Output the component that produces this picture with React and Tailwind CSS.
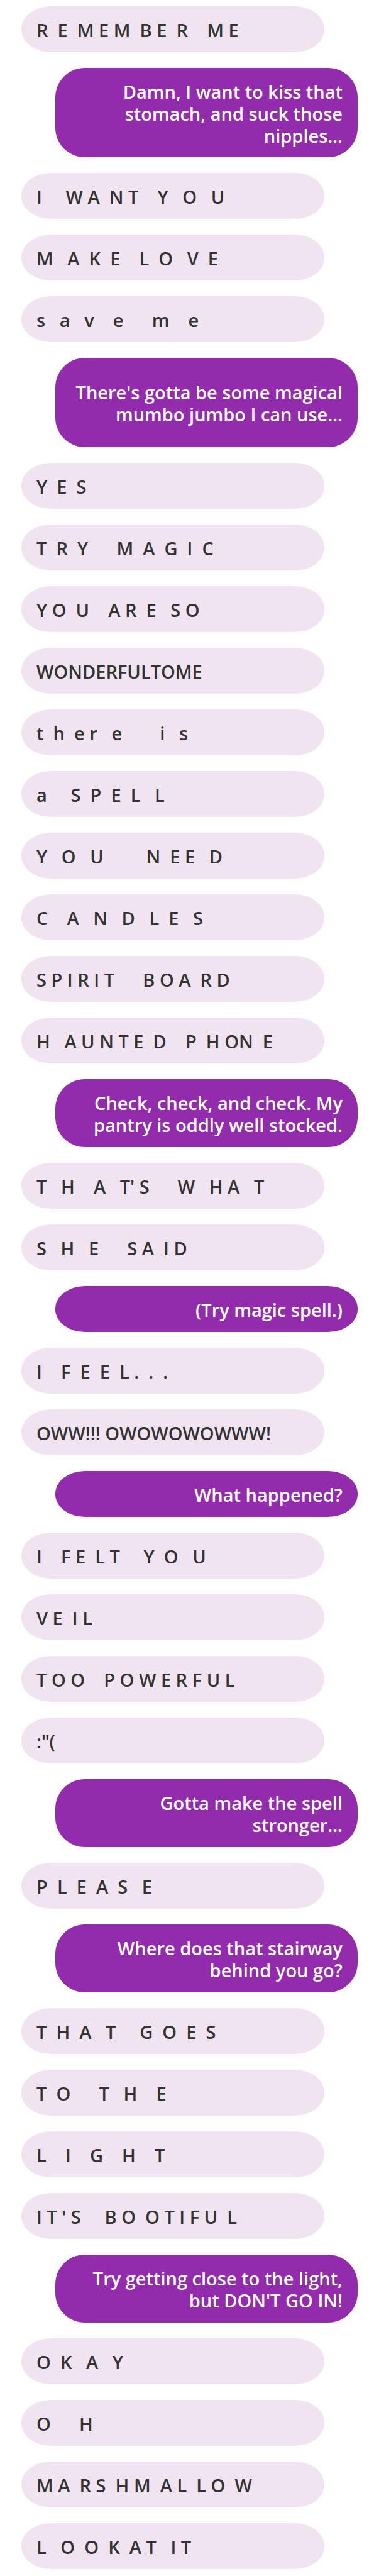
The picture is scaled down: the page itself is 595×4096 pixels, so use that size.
const messages = [
  { text: "R  E  M E M  B E  R    M E" },
  { own: true, size: "lg", text: "Damn, I want to kiss that\nstomach, and suck those\nnipples…" },
  { text: "I     W A  N T    Y   O   U" },
  { text: "M   A  K  E    L  O   V  E" },
  { text: "s   a   v    e      m    e" },
  { own: true, size: "lg", text: "There's gotta be some magical\nmumbo jumbo I can use…" },
  { text: "Y  E  S" },
  { text: "T  R  Y      M  A  G  I  C" },
  { text: "Y O  U    A R  E   S O" },
  { text: "WONDERFULTOME" },
  { text: "t  h  e r   e        i   s" },
  { text: "a     S  P  E  L   L" },
  { text: "Y   O   U         N  E E   D" },
  { text: "C    A   N   D   L  E   S" },
  { text: "S P I R I T      B O A  R D" },
  { text: "H   A U N T E  D    P  H ON  E" },
  { own: true, size: "md", text: "Check, check, and check. My\npantry is oddly well stocked." },
  { text: "T   H    A   T' S      W   H A   T" },
  { text: "S   H   E      S A  I D" },
  { own: true, text: "(Try magic spell.)" },
  { text: "I    F  E  E  L .  .  ." },
  { text: "OWW!!! OWOWOWOWWW!" },
  { own: true, text: "What happened?" },
  { text: "I    F E  L T     Y  O   U" },
  { text: "V E  I L" },
  { text: "T O O    P O W E R F U L" },
  { text: ":\"(" },
  { own: true, size: "md", text: "Gotta make the spell\nstronger…" },
  { text: "P  L  E  A  S   E" },
  { own: true, size: "md", text: "Where does that stairway\nbehind you go?" },
  { text: "T  H  A   T     G  O  E  S" },
  { text: "T  O      T   H    E" },
  { text: "L    I    G    H    T" },
  { text: "I T ' S     B O  O T I F U  L" },
  { own: true, size: "md", text: "Try getting close to the light,\nbut DON'T GO IN!" },
  { text: "O  K   A   Y" },
  { text: "O      H" },
  { text: "M A  R S  H M  A L  L O  W" },
  { text: "L   O  O  K  A T   I T" },
];

const sizes = {
  sm: "min-h-[73px] rounded-[47px/36px]",
  md: "min-h-[108px] rounded-[47px]",
  lg: "min-h-[142px] rounded-[47px]",
};

function Bubble({ own, size = "sm", text }) {
  const tone = own
    ? "self-end justify-end bg-[#932cac] text-right text-white"
    : "self-start bg-[#f0e4f0] text-[#333333]";
  return (
    <li className={`flex w-9/10 items-center px-6 pt-0.5 ${sizes[size]} ${tone}`}>
      <p className={own ? "whitespace-pre-line" : "whitespace-pre"}>{text}</p>
    </li>
  );
}

export default function App() {
  return (
    <main className="min-h-screen bg-white pt-[10px] pr-[26px] pb-[11px] pl-[34px] font-['Open_Sans',sans-serif] text-[29px] leading-[35px] font-semibold">
      <ul className="flex flex-col gap-[25px]">
        {messages.map((message, index) => (
          <Bubble key={index} {...message} />
        ))}
      </ul>
    </main>
  );
}
